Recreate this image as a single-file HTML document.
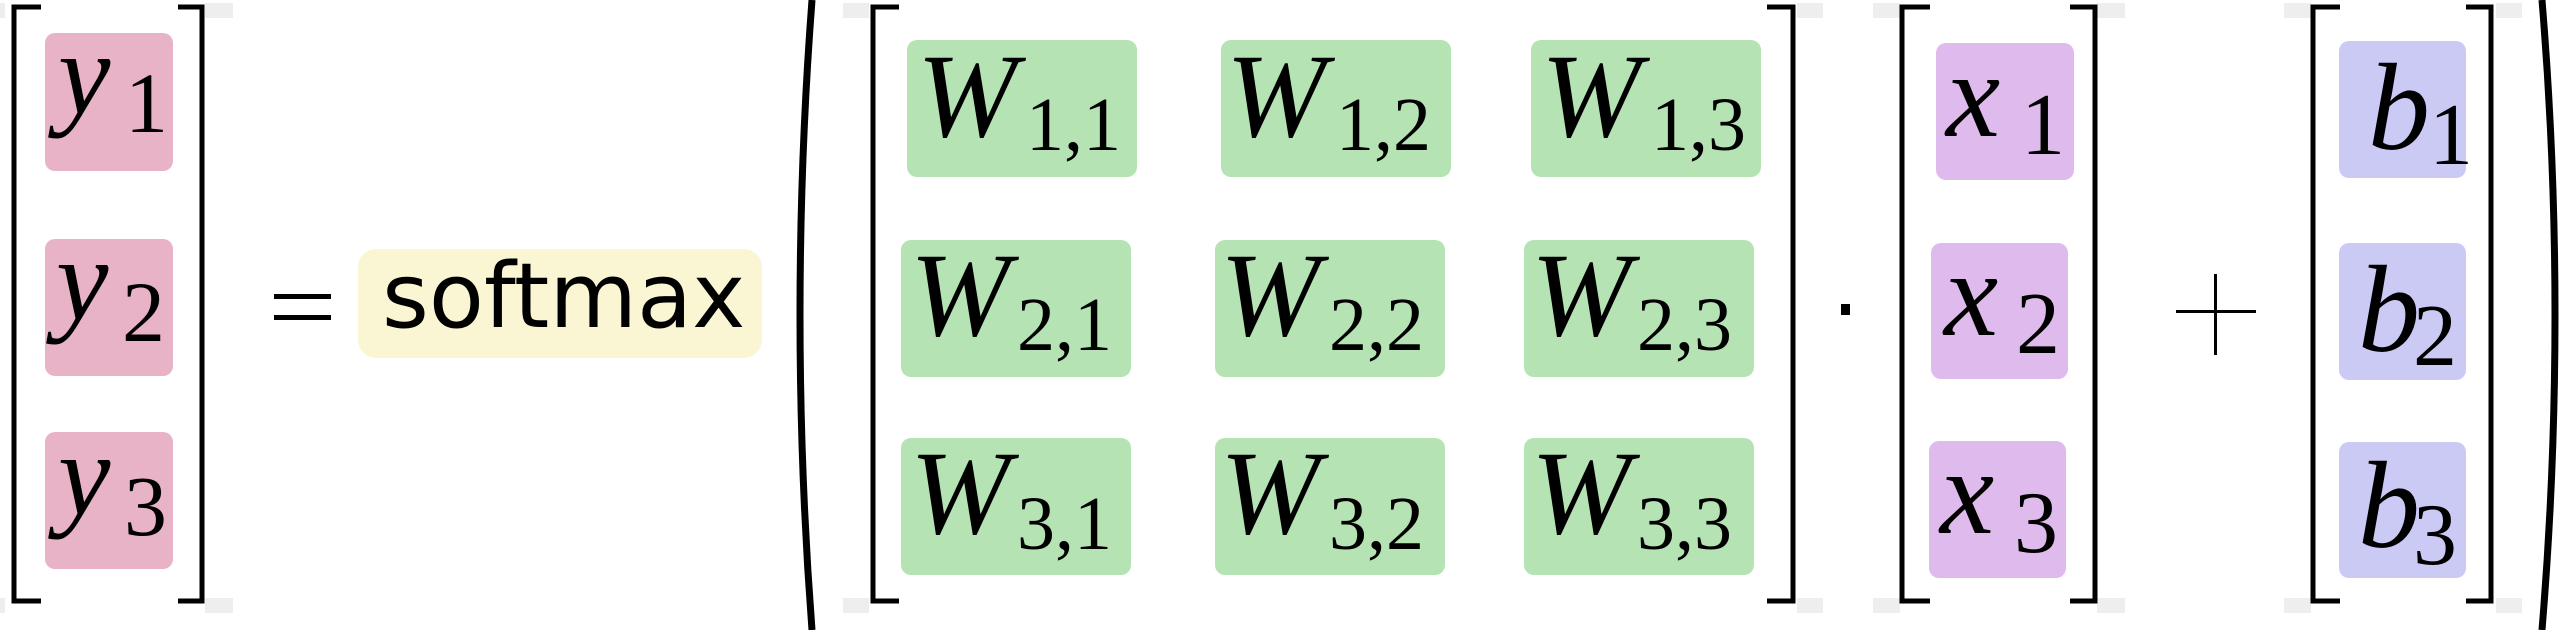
<!DOCTYPE html>
<html><head><meta charset="utf-8"><style>
html,body{margin:0;padding:0;background:#fff;}
body{width:2560px;height:630px;position:relative;overflow:hidden;}
.b{position:absolute;border-radius:10px;}
.pk{background:#e8b3c7}.gr{background:#b5e3b4}.pu{background:#dfbaec}.bl{background:#cbcaf4}.ye{background:#faf5d2;border-radius:18px}
.t{position:absolute;font-family:"Liberation Serif",serif;font-style:italic;line-height:1;white-space:nowrap;color:#000}
.s{position:absolute;font-family:"Liberation Serif",serif;line-height:1;white-space:nowrap;color:#000}
.g{position:absolute;background:#eeeeee;}
</style></head><body>
<!-- gray tick marks -->
<div class="g" style="left:0;top:3px;width:5px;height:15px"></div>
<div class="g" style="left:0;top:598px;width:5px;height:15px"></div>
<div class="g" style="left:205px;top:3px;width:28px;height:15px"></div>
<div class="g" style="left:205px;top:598px;width:28px;height:15px"></div>
<div class="g" style="left:843px;top:3px;width:26px;height:15px"></div>
<div class="g" style="left:843px;top:598px;width:26px;height:15px"></div>
<div class="g" style="left:1797px;top:3px;width:26px;height:15px"></div>
<div class="g" style="left:1797px;top:598px;width:26px;height:15px"></div>
<div class="g" style="left:1873px;top:3px;width:27px;height:15px"></div>
<div class="g" style="left:1873px;top:598px;width:27px;height:15px"></div>
<div class="g" style="left:2097px;top:3px;width:28px;height:15px"></div>
<div class="g" style="left:2097px;top:598px;width:28px;height:15px"></div>
<div class="g" style="left:2284px;top:3px;width:27px;height:15px"></div>
<div class="g" style="left:2284px;top:598px;width:27px;height:15px"></div>
<div class="g" style="left:2496px;top:3px;width:26px;height:15px"></div>
<div class="g" style="left:2496px;top:598px;width:26px;height:15px"></div>

<!-- boxes -->
<div class="b pk" style="left:45px;top:33px;width:128px;height:138px"></div>
<div class="b pk" style="left:45px;top:239px;width:128px;height:137px"></div>
<div class="b pk" style="left:45px;top:432px;width:128px;height:137px"></div>
<div class="b ye" style="left:358px;top:249px;width:404px;height:109px"></div>

<div class="b gr" style="left:907px;top:40px;width:230px;height:137px"></div>
<div class="b gr" style="left:1221px;top:40px;width:230px;height:137px"></div>
<div class="b gr" style="left:1531px;top:40px;width:230px;height:137px"></div>
<div class="b gr" style="left:901px;top:240px;width:230px;height:137px"></div>
<div class="b gr" style="left:1215px;top:240px;width:230px;height:137px"></div>
<div class="b gr" style="left:1524px;top:240px;width:230px;height:137px"></div>
<div class="b gr" style="left:901px;top:438px;width:230px;height:137px"></div>
<div class="b gr" style="left:1215px;top:438px;width:230px;height:137px"></div>
<div class="b gr" style="left:1524px;top:438px;width:230px;height:137px"></div>

<div class="b pu" style="left:1936px;top:43px;width:138px;height:137px"></div>
<div class="b pu" style="left:1931px;top:243px;width:137px;height:136px"></div>
<div class="b pu" style="left:1929px;top:441px;width:137px;height:137px"></div>

<div class="b bl" style="left:2339px;top:41px;width:127px;height:137px"></div>
<div class="b bl" style="left:2339px;top:243px;width:127px;height:137px"></div>
<div class="b bl" style="left:2339px;top:442px;width:127px;height:136px"></div>

<svg style="position:absolute;left:0;top:0" width="2560" height="630">
<g fill="none" stroke="#000" stroke-width="5">
<path d="M41 7H14V601H41"/>
<path d="M178 7H202V601H178"/>
<path d="M899 7H873V601H899"/>
<path d="M1767 7H1793V601H1767"/>
<path d="M1930 7H1902V601H1930"/>
<path d="M2070 7H2095V601H2070"/>
<path d="M2340 7H2313V601H2340"/>
<path d="M2466 7H2491V601H2466"/>
</g>
<g fill="none" stroke="#000" stroke-width="7">
<path d="M812 0Q788 315 812 630"/>
<path d="M2542 0Q2568 315 2542 630"/>
</g>
<rect x="274" y="294" width="57" height="5" fill="#000"/>
<rect x="274" y="315" width="57" height="5" fill="#000"/>
<rect x="1841" y="304" width="9" height="11" fill="#000"/>
<rect x="2176" y="310" width="80" height="3" fill="#000"/>
<rect x="2214" y="274" width="3" height="81" fill="#000"/>
</svg>

<!-- softmax -->
<div style="position:absolute;left:382px;top:252px;font-family:'DejaVu Sans',sans-serif;font-size:90px;line-height:1;color:#000">softmax</div>

<!-- y -->
<div class="t" style="left:58px;top:15px;font-size:118px">y</div>
<div class="s" style="left:125px;top:60px;font-size:86px">1</div>
<div class="t" style="left:56px;top:221px;font-size:118px">y</div>
<div class="s" style="left:122px;top:269px;font-size:86px">2</div>
<div class="t" style="left:58px;top:416px;font-size:118px">y</div>
<div class="s" style="left:124px;top:463px;font-size:86px">3</div>

<!-- W -->
<div class="t" style="left:917px;top:36px;font-size:120px">W</div>
<div class="s" style="left:1026px;top:87px;font-size:76px">1,1</div>
<div class="t" style="left:1226px;top:36px;font-size:120px">W</div>
<div class="s" style="left:1336px;top:87px;font-size:76px">1,2</div>
<div class="t" style="left:1541px;top:36px;font-size:120px">W</div>
<div class="s" style="left:1651px;top:87px;font-size:76px">1,3</div>

<div class="t" style="left:910px;top:235px;font-size:120px">W</div>
<div class="s" style="left:1017px;top:287px;font-size:76px">2,1</div>
<div class="t" style="left:1220px;top:235px;font-size:120px">W</div>
<div class="s" style="left:1329px;top:287px;font-size:76px">2,2</div>
<div class="t" style="left:1531px;top:235px;font-size:120px">W</div>
<div class="s" style="left:1637px;top:287px;font-size:76px">2,3</div>

<div class="t" style="left:910px;top:433px;font-size:120px">W</div>
<div class="s" style="left:1017px;top:486px;font-size:76px">3,1</div>
<div class="t" style="left:1220px;top:433px;font-size:120px">W</div>
<div class="s" style="left:1329px;top:486px;font-size:76px">3,2</div>
<div class="t" style="left:1531px;top:433px;font-size:120px">W</div>
<div class="s" style="left:1637px;top:486px;font-size:76px">3,3</div>

<!-- x -->
<div class="t" style="left:1946px;top:35px;font-size:122px">x</div>
<div class="s" style="left:2021px;top:82px;font-size:88px">1</div>
<div class="t" style="left:1944px;top:234px;font-size:122px">x</div>
<div class="s" style="left:2016px;top:281px;font-size:88px">2</div>
<div class="t" style="left:1940px;top:432px;font-size:122px">x</div>
<div class="s" style="left:2014px;top:480px;font-size:88px">3</div>

<!-- b -->
<div class="t" style="left:2368px;top:46px;font-size:124px">b</div>
<div class="s" style="left:2429px;top:92px;font-size:88px">1</div>
<div class="t" style="left:2358px;top:248px;font-size:124px">b</div>
<div class="s" style="left:2413px;top:293px;font-size:88px">2</div>
<div class="t" style="left:2358px;top:444px;font-size:124px">b</div>
<div class="s" style="left:2413px;top:492px;font-size:88px">3</div>
</body></html>
